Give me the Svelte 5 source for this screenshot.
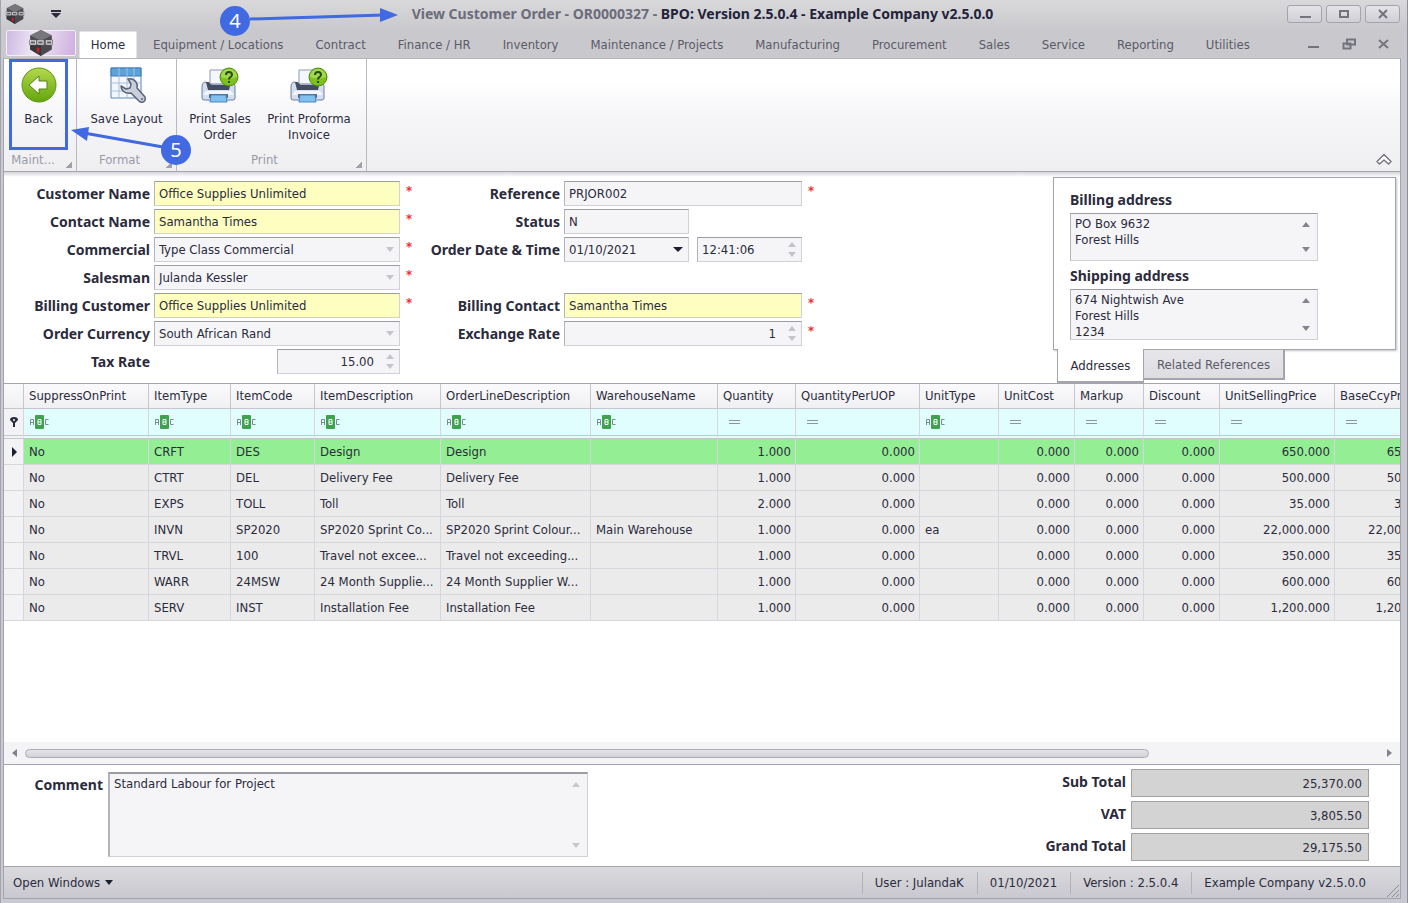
<script>
  const tabs = [
    'Equipment / Locations', 'Contract', 'Finance / HR', 'Inventory', 'Maintenance / Projects',
    'Manufacturing', 'Procurement', 'Sales', 'Service', 'Reporting', 'Utilities'
  ];

  // kind: text | combo | spin, required adds the red star
  const customerFields = [
    { id: 'customer', label: 'Customer Name', value: 'Office Supplies Unlimited', kind: 'text', key: true, required: true },
    { id: 'contact', label: 'Contact Name', value: 'Samantha Times', kind: 'text', key: true, required: true },
    { id: 'commercial', label: 'Commercial', value: 'Type Class Commercial', kind: 'combo', required: true },
    { id: 'salesman', label: 'Salesman', value: 'Julanda Kessler', kind: 'combo', required: true },
    { id: 'billing-customer', label: 'Billing Customer', value: 'Office Supplies Unlimited', kind: 'text', key: true, required: true },
    { id: 'currency', label: 'Order Currency', value: 'South African Rand', kind: 'combo' },
    { id: 'tax', label: 'Tax Rate', value: '15.00', kind: 'spin', short: true }
  ];

  const billingFields = [
    { id: 'billing-contact', label: 'Billing Contact', value: 'Samantha Times', kind: 'text', key: true, required: true },
    { id: 'rate', label: 'Exchange Rate', value: '1', kind: 'spin', required: true }
  ];

  const columns = [
    { name: 'SuppressOnPrint', width: 125 },
    { name: 'ItemType', width: 82 },
    { name: 'ItemCode', width: 84 },
    { name: 'ItemDescription', width: 126 },
    { name: 'OrderLineDescription', width: 150 },
    { name: 'WarehouseName', width: 127 },
    { name: 'Quantity', width: 78, num: true },
    { name: 'QuantityPerUOP', width: 124, num: true },
    { name: 'UnitType', width: 79 },
    { name: 'UnitCost', width: 76, num: true },
    { name: 'Markup', width: 69, num: true },
    { name: 'Discount', width: 76, num: true },
    { name: 'UnitSellingPrice', width: 115, num: true },
    { name: 'BaseCcyPrice', width: 105, num: true }
  ];
  const tableWidth = columns.reduce((sum, c) => sum + c.width, 20);

  const lines = [
    ['CRFT', 'DES', 'Design', 'Design', '', '1.000', '', '650.000'],
    ['CTRT', 'DEL', 'Delivery Fee', 'Delivery Fee', '', '1.000', '', '500.000'],
    ['EXPS', 'TOLL', 'Toll', 'Toll', '', '2.000', '', '35.000'],
    ['INVN', 'SP2020', 'SP2020 Sprint Co...', 'SP2020 Sprint Colour...', 'Main Warehouse', '1.000', 'ea', '22,000.000'],
    ['TRVL', '100', 'Travel not excee...', 'Travel not exceeding...', '', '1.000', '', '350.000'],
    ['WARR', '24MSW', '24 Month Supplie...', '24 Month Supplier W...', '', '1.000', '', '600.000'],
    ['SERV', 'INST', 'Installation Fee', 'Installation Fee', '', '1.000', '', '1,200.000']
  ];
  const rows = lines.map(([type, code, item, line, store, qty, unit, price]) => [
    'No', type, code, item, line, store, qty, '0.000', unit, '0.000', '0.000', '0.000', price, price
  ]);

  const totals = [
    { id: 'subtotal', label: 'Sub Total', value: '25,370.00' },
    { id: 'vat', label: 'VAT', value: '3,805.50' },
    { id: 'grand', label: 'Grand Total', value: '29,175.50' }
  ];

  const status = ['User : JulandaK', '01/10/2021', 'Version : 2.5.0.4', 'Example Company v2.5.0.0'];
</script>

{#snippet logo(size)}
  <svg width={size} height={size} viewBox="0 0 24 24" aria-hidden="true">
    <path d="M12 0 22 5v13l-10 6L2 18V5z" fill="#4b4b4f" />
    <path d="M12 0 22 5l-10 5L2 5z" fill="#77777b" />
    <path d="M12 13v11L2 18V9z" fill="#38383c" />
    <path d="M1 9h22v5H1z" fill="#5c5c60" />
    <path d="M2 9v4h5v-3H2M9 13v-3h5v3H9M17 13v-3h5v3h-5" fill="none" stroke="#d8d8dc" />
    <path d="M8 16l3 1-1 4-2-1z" fill="#c0222b" />
  </svg>
{/snippet}

{#snippet arrows()}
  <span class="arrows" aria-hidden="true">
    <svg width="8" height="5" viewBox="0 0 8 5"><path d="M0 5 4 0l4 5z" /></svg>
    <svg width="8" height="5" viewBox="0 0 8 5"><path d="M0 0h8L4 5z" /></svg>
  </span>
{/snippet}

{#snippet formRow(f)}
  <div class="row">
    <label for={f.id}>{f.label}</label>
    <div class="slot">
      <div class="field" class:key={f.key} class:short={f.short}>
        {#if f.kind === 'combo'}
          <select id={f.id}><option>{f.value}</option></select>
          <svg class="drop" width="8" height="5" viewBox="0 0 8 5" aria-hidden="true"><path d="M0 0h8L4 5z" /></svg>
        {:else}
          <input id={f.id} class:num={f.kind === 'spin'} value={f.value} readonly />
          {#if f.kind === 'spin'}{@render arrows()}{/if}
        {/if}
      </div>
    </div>
    <span class="star">{f.required ? '*' : ''}</span>
  </div>
{/snippet}

{#snippet printer()}
  <svg width="40" height="40" viewBox="0 0 40 40" aria-hidden="true">
    <path d="M10 5h16v15H10z" fill="#f4f7fc" stroke="#8d9ab5" />
    <path d="M6 17q-4 0-4 5v11q0 2 2 2h29q2 0 2-2V22q0-5-4-5l-3 2H9z" fill="#d3deef" stroke="#6f7fa3" />
    <path d="M6 17h3q1 3 3 3h14q2 0 3-3h2l-2 8H8z" fill="#434c63" />
    <path d="M6 26h25l3 4H3z" fill="#f3f7fd" />
    <path d="M9 29h19v4H9z" fill="#5a678a" />
    <path d="M11 30h15l1 7H10z" fill="#7fc0f0" stroke="#4f86bd" />
    <circle cx="29" cy="12" r="9" fill="#7cc11c" stroke="#4d8a10" />
    <path d="M21 12a8 8 0 0 1 16 0q-8 3-16 0z" fill="#a2d84c" />
    <path d="M26 10q0-3 3-3t3 3q0 1-2 2.500-1 .5-1 2M29 16v2" fill="none" stroke="#2b4a10" stroke-width="2" />
  </svg>
{/snippet}

<div class="window">
  <header class="titlebar">
    <div class="quick">
      {@render logo(20)}
      <button class="plain" aria-label="Customize quick access toolbar">
        <svg width="10" height="8" viewBox="0 0 10 8"><path d="M0 0h10v2H0zM0 3h10L5 8z" fill="#2b2b3c" /></svg>
      </button>
    </div>
    <h1><span>View Customer Order - OR0000327 -</span> BPO: Version 2.5.0.4 - Example Company v2.5.0.0</h1>
    <div class="caption-buttons">
      <button aria-label="Minimize"><svg width="12" height="10" viewBox="0 0 12 10"><path d="M1 8h11" /></svg></button>
      <button aria-label="Maximize"><svg width="12" height="10" viewBox="0 0 12 10"><path d="M2 2h8v6H2z" /></svg></button>
      <button aria-label="Close"><svg width="12" height="10" viewBox="0 0 12 10"><path d="M2 1l8 8M10 1 2 9" /></svg></button>
    </div>
  </header>

  <nav class="tabs">
    <button class="app-button" aria-label="Application menu">{@render logo(26)}</button>
    <button class="tab active">Home</button>
    {#each tabs as tab}
      <button class="tab">{tab}</button>
    {/each}
    <div class="mdi">
      <button class="plain" aria-label="Minimize document"><svg width="14" height="12" viewBox="0 0 14 12"><path d="M1 9h11" /></svg></button>
      <button class="plain" aria-label="Restore document"><svg width="14" height="12" viewBox="0 0 14 12"><path d="M5 1.500h8v5H5zM1.500 5.500h7v5h-7z" /></svg></button>
      <button class="plain" aria-label="Close document"><svg width="14" height="12" viewBox="0 0 14 12"><path d="M2 2l9 8M11 2l-9 8" /></svg></button>
    </div>
  </nav>

  <section class="ribbon">
    <div class="group maint">
      <div class="tools">
        <button class="tool back">
          <svg width="40" height="40" viewBox="0 0 40 40" aria-hidden="true">
            <defs>
              <linearGradient id="green" x1="0" y1="0" x2="0" y2="1">
                <stop offset="0" stop-color="#b4d84c" />
                <stop offset="1" stop-color="#63a50c" />
              </linearGradient>
            </defs>
            <circle cx="20" cy="20" r="17" fill="url(#green)" stroke="#5c9510" />
            <path d="M10 20 20 11v5h8v8h-8v5z" fill="#fff" stroke="#4f850e" stroke-linejoin="round" />
          </svg>
          <span>Back</span>
        </button>
      </div>
      <footer>Maint...</footer>
    </div>
    <div class="group format">
      <div class="tools">
        <button class="tool">
          <svg width="40" height="40" viewBox="0 0 40 40" aria-hidden="true">
            <path d="M4 3h30v30H4z" fill="#f2f7fd" stroke="#5f84b8" />
            <path d="M4 3h30v8H4z" fill="#5ba3dd" stroke="#3f78b4" />
            <path d="M12 3v30M20 3v30M27 3v30M4 18h30M4 26h30" stroke="#a8bfdc" fill="none" />
            <path d="M21 14q5-1 8 3 2 3 1 6l8 9q1 4-2 5-2 1-4-1l-8-8q-5 1-8-2-2-2-2-5l5 3 4-1 1-4z" fill="#c9d0dc" stroke="#59637a" stroke-width="1.500" stroke-linejoin="round" />
            <circle cx="35" cy="34" r="1" fill="#59637a" />
          </svg>
          <span>Save Layout</span>
        </button>
      </div>
      <footer>Format</footer>
    </div>
    <div class="group print">
      <div class="tools">
        <button class="tool">{@render printer()}<span>Print Sales Order</span></button>
        <button class="tool">{@render printer()}<span>Print Proforma Invoice</span></button>
      </div>
      <footer>Print</footer>
    </div>
    <button class="plain collapse" aria-label="Collapse the ribbon">
      <svg width="18" height="14" viewBox="0 0 18 14"><path d="M2 9.500 9 2.500l7 7-2.500 2.500L9 8l-4.500 4z" fill="#fff" stroke="#77777f" stroke-width="1.500" stroke-linejoin="round" /></svg>
    </button>
  </section>

  <form class="order">
    <div class="pane left">
      {#each customerFields as f}{@render formRow(f)}{/each}
    </div>

    <div class="pane right">
      {@render formRow({ id: 'reference', label: 'Reference', value: 'PRJOR002', kind: 'text', required: true })}
      <div class="row">
        <label for="state">Status</label>
        <div class="slot"><div class="field half"><input id="state" value="N" readonly /></div></div>
        <span class="star"></span>
      </div>
      <div class="row">
        <label for="date">Order Date &amp; Time</label>
        <div class="slot split">
          <div class="field half">
            <input id="date" value="01/10/2021" readonly />
            <svg class="drop dark" width="10" height="5" viewBox="0 0 10 5" aria-hidden="true"><path d="M0 0h10L5 5z" /></svg>
          </div>
          <div class="field">
            <input aria-label="Order time" value="12:41:06" readonly />
            {@render arrows()}
          </div>
        </div>
        <span class="star"></span>
      </div>
      <div class="row"></div>
      {#each billingFields as f}{@render formRow(f)}{/each}
    </div>

    <aside>
      <div class="addresses">
        <label for="billing">Billing address</label>
        <div class="field memo"><textarea id="billing" rows="3" readonly value={'PO Box 9632\nForest Hills'}></textarea>{@render arrows()}</div>
        <label for="shipping">Shipping address</label>
        <div class="field memo"><textarea id="shipping" rows="3" readonly value={'674 Nightwish Ave\nForest Hills\n1234'}></textarea>{@render arrows()}</div>
      </div>
      <div class="address-tabs">
        <button type="button" class="current">Addresses</button>
        <button type="button">Related References</button>
      </div>
    </aside>
  </form>

  <section class="grid">
    <div class="viewport">
      <table style="width: {tableWidth}px">
        <colgroup>
          <col style="width: 20px" />
          {#each columns as c}<col style="width: {c.width}px" />{/each}
        </colgroup>
        <thead>
          <tr>
            <th></th>
            {#each columns as c}<th>{c.name}</th>{/each}
          </tr>
          <tr class="filter">
            <td class="mark"><svg width="8" height="10" viewBox="0 0 8 10"><path d="M0 3a4 3 0 0 1 8 0L5 6v4H3V6z" fill="#2b2b3c" /><circle cx="4" cy="3" r="1" fill="#fff" /></svg></td>
            {#each columns as c}
              <td>
                {#if c.num}
                  <svg width="20" height="14" viewBox="0 0 20 14"><path d="M6 5.500h11M6 8.500h11" stroke="#8c949c" /></svg>
                {:else}
                  <svg width="20" height="14" viewBox="0 0 20 14">
                    <path d="M1.500 10V4.500h3V10M1.500 7.500h3M19.500 4.500h-3v5h3" fill="none" stroke="#7c8a8a" />
                    <rect x="6" width="9" height="14" rx="1" fill="#3fa34d" />
                    <path d="M9 4.500h3v5H9zM9 7h3" fill="none" stroke="#fff" />
                  </svg>
                {/if}
              </td>
            {/each}
          </tr>
        </thead>
        <tbody>
          {#each rows as row, i}
            <tr class:selected={i === 0}>
              <td class="mark">{#if i === 0}<svg width="5" height="10" viewBox="0 0 5 10"><path d="M0 0l5 5-5 5z" fill="#1e1e2e" /></svg>{/if}</td>
              {#each row as cell, j}<td class:num={columns[j].num}>{cell}</td>{/each}
            </tr>
          {/each}
        </tbody>
      </table>
    </div>
    <div class="scrollbar">
      <svg width="5" height="8" viewBox="0 0 5 8"><path d="M5 0v8L0 4z" /></svg>
      <div class="track"><div class="thumb"></div></div>
      <svg width="5" height="8" viewBox="0 0 5 8"><path d="M0 0v8l5-4z" /></svg>
    </div>
  </section>

  <section class="summary">
    <label for="comment">Comment</label>
    <div class="field memo comment"><textarea id="comment" readonly value="Standard Labour for Project"></textarea>{@render arrows()}</div>
    <div class="totals">
      {#each totals as t}
        <div class="total">
          <label for={t.id}>{t.label}</label>
          <input id={t.id} value={t.value} readonly />
        </div>
      {/each}
    </div>
  </section>

  <footer class="statusbar">
    <button class="plain">Open Windows <svg width="8" height="5" viewBox="0 0 8 5"><path d="M0 0h8L4 5z" fill="#1e1e2e" /></svg></button>
    <div class="status">
      {#each status as s}<span>{s}</span>{/each}
    </div>
    <svg class="grip" width="14" height="14" viewBox="0 0 14 14"><path d="M1 13 13 1M6 13l7-7M10 13l3-3" stroke="#8e8e98" /></svg>
  </footer>

  <!-- numbered callouts drawn over the window -->
  <svg class="callouts" width="420" height="180" viewBox="0 0 420 180">
    <path d="M250 19 384 15" stroke="#4169e1" stroke-width="3" />
    <path d="M380 8v14l18-7z" fill="#4169e1" />
    <circle cx="235" cy="21" r="15" fill="#4169e1" />
    <text x="235" y="28">4</text>
    <path d="M163 147 84 133" stroke="#4169e1" stroke-width="3" />
    <path d="M71 130l18-3-2 14z" fill="#4169e1" />
    <circle cx="176" cy="150" r="15" fill="#4169e1" />
    <text x="176" y="157">5</text>
  </svg>
</div>

<style>
  :global(body) { margin: 0; }

  * { box-sizing: border-box; }

  .window {
    position: relative;
    min-height: 100vh;
    display: flex;
    flex-direction: column;
    padding: 0 6px 4px 2px;
    border-left: 1px solid #a4a4ae;
    border-right: 1px solid #8e8e9c;
    background: #c9c9d1;
    color: #2b2b3c;
    font: 13px/16px "DejaVu Sans Condensed", "Noto Sans", sans-serif;
  }

  button, input, select, textarea {
    margin: 0;
    font: inherit;
    color: inherit;
  }

  button {
    padding: 0;
    border: 0;
    background: none;
  }

  label, h1 {
    font: 700 14px/18px "Noto Sans", sans-serif;
  }

  .plain { display: flex; align-items: center; gap: 5px; }

  /* title bar */
  .titlebar {
    display: grid;
    grid-template-columns: 1fr auto 1fr;
    align-items: center;
    height: 30px;
    margin: 0 -6px 0 -2px;
    padding: 0 7px 2px 4px;
    background: linear-gradient(#d9d9dc, #c9c9cd);
  }

  .quick { display: flex; align-items: center; gap: 26px; }

  h1 { margin: 0; color: #23233a; white-space: nowrap; }
  h1 span { color: #6c6c7a; }

  .caption-buttons { display: flex; justify-content: flex-end; gap: 4px; }

  .caption-buttons button {
    display: flex;
    align-items: center;
    justify-content: center;
    width: 35px;
    height: 18px;
    border: 1px solid #a3a3ad;
    border-radius: 3px;
    background: linear-gradient(#e4e4e8, #cfcfd5);
  }

  .caption-buttons path, .mdi path { fill: none; stroke: #74747f; stroke-width: 2; }

  /* ribbon tabs */
  .tabs {
    display: flex;
    align-items: flex-end;
    height: 28px;
    margin: 0 -6px 0 -2px;
    padding-left: 5px;
    background: #c9c9cd;
  }

  .app-button {
    align-self: flex-start;
    display: flex;
    align-items: center;
    justify-content: center;
    width: 70px;
    height: 26px;
    margin-right: 3px;
    border: 1px solid #f4eef8;
    border-radius: 2px;
    background: linear-gradient(100deg, #cdb8e2, #efe6f6 40%, #e0cdea 70%, #cfaee0);
  }

  .tab {
    height: 27px;
    padding: 0 16px;
    color: #5a5a68;
    white-space: nowrap;
  }

  .tab.active {
    width: 58px;
    padding: 0;
    border: 1px solid #e4e4e8;
    border-bottom: 0;
    border-radius: 2px 2px 0 0;
    background: #fff;
    color: #2b2b3c;
  }

  .mdi { display: flex; gap: 21px; margin-left: auto; padding: 0 16px 8px 0; }

  /* ribbon */
  .ribbon {
    display: flex;
    height: 114px;
    border: 1px solid #a4a4ae;
    border-top-color: #b4b4bc;
    background: linear-gradient(#fff 20%, #f6f6f9 50%, #efeff2);
  }

  .group {
    display: flex;
    flex-direction: column;
    border-right: 1px solid #b8b8c2;
  }

  .maint { width: 73px; }
  .format { width: 100px; }
  .print { width: 190px; }

  .tools {
    flex: 1;
    display: flex;
    gap: 3px;
  }

  .format .tools { justify-content: center; }

  .tool {
    display: flex;
    flex-direction: column;
    align-items: center;
    width: 86px;
    padding-top: 6px;
  }

  .tool svg { flex: none; margin-bottom: 6px; }

  .tool.back {
    width: 59px;
    margin-left: 5px;
    border: 3px solid #4169e1;
    padding-top: 3px;
  }

  .group footer {
    height: 21px;
    padding: 2px 14px 0 0;
    color: #9a9aa4;
    text-align: center;
    background: linear-gradient(135deg, transparent 50%, #a0a0aa 50%) right 4px bottom 3px / 6px 6px no-repeat;
  }

  .collapse { align-self: flex-end; margin: 0 7px 5px auto; }

  /* order form */
  .order {
    display: flex;
    flex-wrap: wrap;
    height: 211px;
    padding-top: 5px;
    border: 1px solid #a4a4ae;
    border-width: 0 1px;
    background: linear-gradient(#d6d6da, #fff 5px);
  }

  .pane {
    display: flex;
    flex-direction: column;
    gap: 3px;
    padding-top: 4px;
  }

  .row { display: flex; align-items: center; gap: 4px; height: 25px; }
  .row label { text-align: right; white-space: nowrap; }
  .left label { width: 146px; }
  .right label { width: 138px; }
  .left .slot { width: 246px; }
  .right .slot { width: 238px; }

  .slot { display: flex; }
  .split { gap: 8px; }

  .star {
    width: 18px;
    height: 25px;
    padding: 2px 0 0 2px;
    color: #f03030;
    font-weight: 700;
  }

  .field {
    flex: 1;
    display: flex;
    align-items: center;
    min-width: 0;
    height: 25px;
    padding-right: 5px;
    border: 1px solid #d0d0d6;
    border-top-color: #9c9ca4;
    border-left-color: #b4b4bc;
    background: #f5f5f8;
  }

  .field.key { background: #fefec0; }
  .field.short { flex: none; width: 123px; margin-left: auto; }
  .field.half { flex: none; width: 125px; }

  .field input, .field select, .field textarea {
    flex: 1;
    min-width: 0;
    height: 23px;
    padding: 0 0 0 4px;
    border: 0;
    outline: 0;
    background: none;
    appearance: none;
    resize: none;
  }

  .field .num { padding-right: 12px; text-align: right; }

  .drop { fill: #c4c4cc; }
  .drop.dark { fill: #1e1e2e; }

  .arrows {
    align-self: stretch;
    display: flex;
    flex-direction: column;
    justify-content: space-between;
    padding: 4px 0;
    fill: #c4c4cc;
  }

  aside { display: flex; flex-direction: column; width: 343px; margin: 0 4px 0 auto; }

  .addresses {
    display: flex;
    flex-direction: column;
    height: 173px;
    padding: 13px 77px 0 16px;
    border: 1px solid #a4a4ae;
    background: #fff;
    box-shadow: 1px 1px 2px #c4c4cc;
  }

  .memo { flex: none; height: 48px; padding-right: 7px; }
  .memo textarea { align-self: stretch; height: auto; padding: 2px 0 0 4px; overflow: hidden; }
  .memo .arrows { padding: 8px 0; fill: #85858f; }
  .addresses label { margin-bottom: 4px; }
  .addresses .memo + label { margin-top: 6px; }
  .addresses .memo:last-child { height: 51px; }

  .address-tabs { display: flex; align-items: flex-start; padding-left: 4px; margin-top: -1px; }

  .address-tabs button {
    height: 31px;
    width: 141px;
    padding-top: 2px;
    border: 1px solid #a4a4ae;
    border-width: 1px 2px 2px 0;
    background: linear-gradient(#e6e6ea, #dedee2);
    color: #5a5a68;
  }

  .address-tabs .current {
    position: relative;
    width: 87px;
    height: 34px;
    border-width: 0 1px 2px;
    background: #fff;
    color: #2b2b3c;
  }

  /* order lines */
  .grid {
    flex: 1;
    display: flex;
    flex-direction: column;
    min-width: 0;
    border: 1px solid #a4a4ae;
    background: #fff;
  }

  .viewport { flex: 1; overflow: hidden; }

  table { table-layout: fixed; border-spacing: 0; }

  th, td {
    height: 26px;
    padding: 0 4px 0 5px;
    overflow: hidden;
    border: 1px solid #d6d6dc;
    border-width: 0 1px 1px 0;
    text-align: left;
    white-space: nowrap;
  }

  th {
    height: 25px;
    border-color: #c6c6ce;
    background: linear-gradient(#fafafc, #f0f0f3);
    font-weight: 400;
  }

  td { background: #ebebeb; }
  td.num { padding-left: 0; text-align: right; }
  td svg { display: block; }

  .filter td { height: 30px; border-bottom: 4px double #c6c6ce; background: #e0fefe; }
  .selected td { background: #94ee94; }

  td.mark, .filter td.mark { padding: 0 0 0 6px; background: #f3f3f6; }
  .selected td.mark { padding-left: 8px; }

  .scrollbar {
    display: flex;
    align-items: center;
    gap: 8px;
    height: 22px;
    padding: 0 8px;
    background: #f4f4f7;
    fill: #82828c;
  }

  .track { flex: 1; }

  .thumb {
    width: 83%;
    height: 9px;
    border: 1px solid #acacb6;
    border-radius: 5px;
    background: linear-gradient(#e4e4e8, #d2d2d8);
  }

  /* comment and totals */
  .summary {
    display: flex;
    align-items: flex-start;
    height: 101px;
    padding: 4px 31px 0 0;
    border: 1px solid #a4a4ae;
    border-width: 0 1px;
    background: #fff;
  }

  .summary > label { width: 99px; padding-top: 7px; text-align: right; }

  .comment { flex: none; width: 480px; height: 85px; margin: 3px 0 0 5px; border-left-width: 2px; border-top-width: 2px; }
  .comment .arrows { fill: #c8c8ce; }

  .totals { display: flex; flex-direction: column; gap: 4px; margin-left: auto; }
  .total { display: flex; align-items: center; justify-content: flex-end; gap: 5px; }
  .total label { padding-bottom: 2px; }

  .total input {
    width: 238px;
    height: 28px;
    padding: 0 6px;
    border: 1px solid #a2a2a6;
    background: #d3d3d3;
    text-align: right;
  }

  /* status bar */
  .statusbar {
    display: flex;
    align-items: center;
    height: 33px;
    padding-left: 9px;
    border: 1px solid #a4a4ae;
    background: linear-gradient(#dadade, #c8c8cf);
  }

  .status { display: flex; margin-left: auto; }
  .status span { padding: 3px 13px 3px 12px; border-left: 1px solid #b2b2ba; }
  .grip { align-self: flex-end; margin-left: 7px; }

  .callouts { position: absolute; left: -1px; top: 0; pointer-events: none; }

  .callouts text {
    fill: #fff;
    font: 20px "Noto Sans", sans-serif;
    text-anchor: middle;
  }
</style>
